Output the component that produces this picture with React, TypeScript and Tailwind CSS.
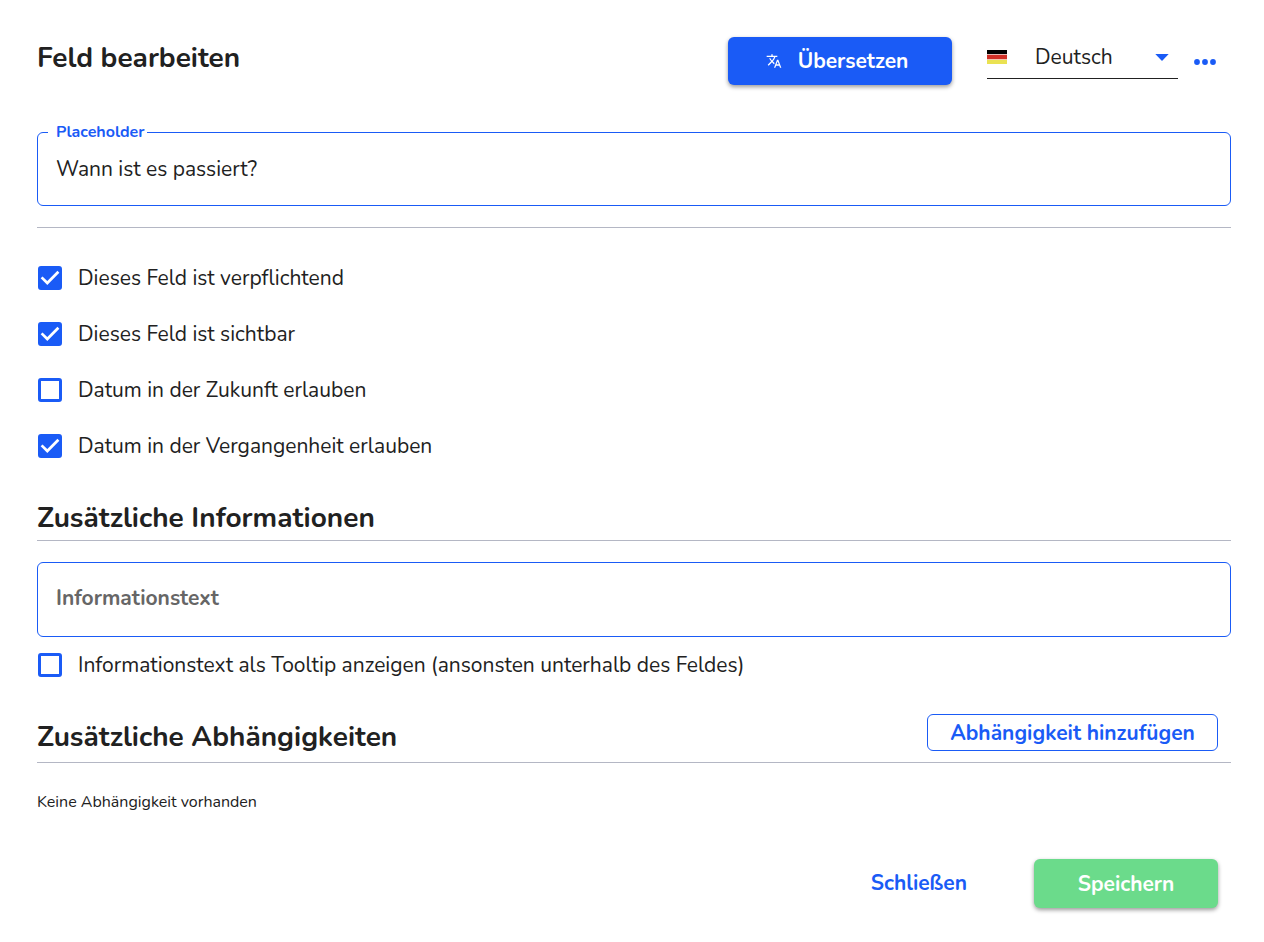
import { useState } from "react";

function Checkbox({ id, label, initial = false }: { id: string; label: string; initial?: boolean }) {
  const [checked, setChecked] = useState(initial);
  return (
    <div className="flex h-14 items-center gap-4 pl-px">
      <span className="relative flex size-6 shrink-0">
        <input
          id={id}
          type="checkbox"
          checked={checked}
          onChange={(e) => setChecked(e.target.checked)}
          className="size-6 appearance-none rounded-[3px] border-3 border-[#1a5bf6] bg-white checked:bg-[#1a5bf6]"
        />
        {checked && (
          <svg viewBox="0 0 24 24" className="pointer-events-none absolute inset-0 size-6" fill="none" stroke="white" strokeWidth="2.7" aria-hidden="true">
            <path d="M3.6 11.4 9.3 17 20.4 5.8" />
          </svg>
        )}
      </span>
      <label htmlFor={id}>{label}</label>
    </div>
  );
}

export default function App() {
  const [language, setLanguage] = useState("de");
  const [placeholder, setPlaceholder] = useState("Wann ist es passiert?");
  const [info, setInfo] = useState("");

  return (
    <main className="bg-white pt-[37px] pr-[33px] pb-8 pl-[37px] font-['Nunito','Lato',sans-serif] text-[21px] leading-7 text-[#212121]">
      <header className="flex items-start">
        <h1 className="mt-[3px] flex-1 text-[28px] leading-9 font-bold">Feld bearbeiten</h1>
        <button
          type="button"
          className="flex h-12 w-56 items-center justify-center gap-4 rounded-md bg-[#1a5bf6] pr-1.5 font-bold text-white shadow-[0_2px_4px_rgba(0,0,0,0.4)]"
        >
          <svg viewBox="0 0 24 24" className="size-4" fill="currentColor" aria-hidden="true">
            <path d="M12.87 15.07l-2.54-2.51.03-.03c1.74-1.94 2.98-4.17 3.71-6.53H17V4h-7V2H8v2H1v1.99h11.17C11.5 7.92 10.44 9.75 9 11.35 8.07 10.32 7.3 9.19 6.69 8h-2c.73 1.63 1.73 3.17 2.98 4.56l-5.09 5.02L4 19l5-5 3.11 3.11.76-2.04zM18.5 10h-2L12 22h2l1.12-3h4.75L21 22h2l-4.5-12zm-2.62 7l1.62-4.33L19.12 17h-3.24z" />
          </svg>
          Übersetzen
        </button>
        <div className="ml-[35px] flex h-[42px] w-[191px] items-center border-b border-[#212121]">
          <svg viewBox="0 0 20 14" className="mb-0.5 h-3.5 w-5 shrink-0" aria-hidden="true">
            <path fill="#000" d="M0 0h20v4H0z" />
            <path fill="#e5b8b5" d="M0 4h20v1H0z" />
            <path fill="#cf2e26" d="M0 5h20v4H0z" />
            <path fill="#f0c5ad" d="M0 9h20v1H0z" />
            <path fill="#eae252" d="M0 10h20v4H0z" />
          </svg>
          <select
            aria-label="Sprache"
            value={language}
            onChange={(e) => setLanguage(e.target.value)}
            className="mb-0.5 min-w-0 flex-1 appearance-none bg-transparent pl-7 outline-none"
          >
            <option value="de">Deutsch</option>
          </select>
          <svg viewBox="0 0 14 7" className="mr-[9px] h-[7px] w-3.5 shrink-0" fill="#1a5bf6" aria-hidden="true">
            <path d="M.3 0h13.4L7 7z" />
          </svg>
        </div>
        <button type="button" aria-label="Weitere Optionen" className="mt-[13px] mr-[15px] ml-4 flex h-6 items-center">
          <svg viewBox="0 0 22 6" className="h-1.5 w-[22px]" fill="#1a5bf6" aria-hidden="true">
            <circle cx="3" cy="3" r="2.9" />
            <circle cx="11" cy="3" r="2.9" />
            <circle cx="19" cy="3" r="2.9" />
          </svg>
        </button>
      </header>

      <fieldset className="mt-9 h-[85px] rounded-md border border-[#1a5bf6] px-2.5">
        <legend className="pr-0.5 pl-2 text-base leading-[22px] font-bold text-[#1a5bf6]">
          <label htmlFor="placeholder">Placeholder</label>
        </legend>
        <input
          id="placeholder"
          type="text"
          value={placeholder}
          onChange={(e) => setPlaceholder(e.target.value)}
          className="mt-1.5 block h-10 w-full px-2 outline-none"
        />
      </fieldset>
      <hr className="mt-[21px] mb-[22px] border-[#b4b7c4]" />

      <Checkbox id="required" label="Dieses Feld ist verpflichtend" initial />
      <Checkbox id="visible" label="Dieses Feld ist sichtbar" initial />
      <Checkbox id="future" label="Datum in der Zukunft erlauben" />
      <Checkbox id="past" label="Datum in der Vergangenheit erlauben" initial />

      <h2 className="mt-[26px] border-b border-[#b4b7c4] pb-1 text-[28px] leading-9 font-bold">
        Zusätzliche Informationen
      </h2>
      <input
        type="text"
        aria-label="Informationstext"
        placeholder="Informationstext"
        value={info}
        onChange={(e) => setInfo(e.target.value)}
        className="mt-[21px] block h-[75px] w-full rounded-md border border-[#1a5bf6] px-[18px] pb-1 outline-none placeholder:font-bold placeholder:text-[#666666]"
      />
      <Checkbox id="tooltip" label="Informationstext als Tooltip anzeigen (ansonsten unterhalb des Feldes)" />

      <div className="mt-[21px] flex items-start justify-between border-b border-[#b4b7c4] pr-[13px] pb-[7px]">
        <h2 className="mt-[5px] text-[28px] leading-9 font-bold">Zusätzliche Abhängigkeiten</h2>
        <button
          type="button"
          className="h-[37px] w-[291px] rounded-md border border-[#1a5bf6] font-bold text-[#1a5bf6]"
        >
          Abhängigkeit hinzufügen
        </button>
      </div>
      <p className="mt-[27px] text-base leading-6">Keine Abhängigkeit vorhanden</p>

      <footer className="mt-[45px] flex justify-end gap-[43px] pr-[13px] font-bold">
        <button type="button" className="h-12 px-6 text-[#1a5bf6]">
          Schließen
        </button>
        <button
          type="button"
          className="h-[49px] w-[184px] rounded-md bg-[#6bdb8b] text-white shadow-[0_2px_4px_rgba(0,0,0,0.4)]"
        >
          Speichern
        </button>
      </footer>
    </main>
  );
}
